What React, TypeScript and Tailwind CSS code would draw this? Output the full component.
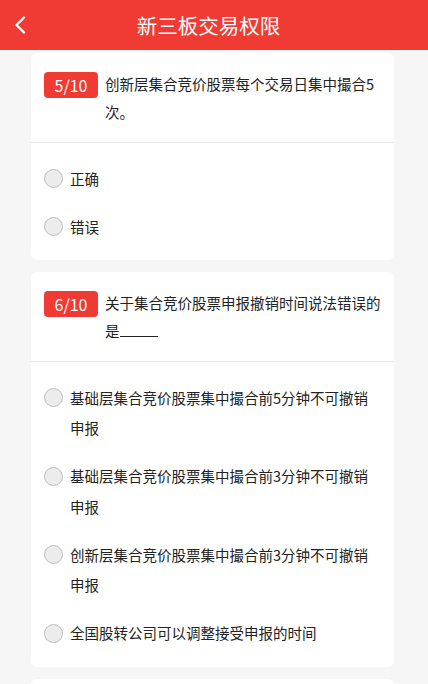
import React from 'react';

type Question = {
  no: string;
  text: string;
  blank?: boolean;
  options: string[];
};

const questions: Question[] = [
  {
    no: '5/10',
    text: '创新层集合竞价股票每个交易日集中撮合5次。',
    options: ['正确', '错误'],
  },
  {
    no: '6/10',
    text: '关于集合竞价股票申报撤销时间说法错误的是',
    blank: true,
    options: [
      '基础层集合竞价股票集中撮合前5分钟不可撤销申报',
      '基础层集合竞价股票集中撮合前3分钟不可撤销申报',
      '创新层集合竞价股票集中撮合前3分钟不可撤销申报',
      '全国股转公司可以调整接受申报的时间',
    ],
  },
];

function QuestionCard({ q }: { q: Question }) {
  return (
    <div className="bg-white rounded-md">
      {/* Question */}
      <div className="flex items-start pl-[13px] pr-[12px] pt-[17px] pb-[16px] border-b border-[#e6e6e6]">
        <span className="shrink-0 mt-[2px] w-[54px] h-[26px] flex items-center justify-center rounded-[4px] bg-[#ef3b33] text-white text-[16px]">
          {q.no}
        </span>
        <p className="ml-[7px] text-[14.5px] leading-[28px] text-[#222]">
          {q.text}
          {q.blank && <span className="inline-block w-[38px] h-[16px] border-b-[1.5px] border-[#222] align-baseline" />}
        </p>
      </div>

      {/* Options */}
      <div className="pt-[12px] pb-[9px] pl-[13px] pr-[12px]">
        {q.options.map((opt) => (
          <div key={opt} className="flex items-start py-[8.75px]">
            <span className="shrink-0 mt-[5.5px] w-[19px] h-[19px] rounded-full bg-[#ececec] border border-[#bdbdbd]" />
            <span className="ml-[7px] text-[14.5px] leading-[30.5px] text-[#222]">{opt}</span>
          </div>
        ))}
      </div>
    </div>
  );
}

export default function App() {
  return (
    <div
      className="w-[428px] h-[684px] overflow-hidden bg-[#f6f6f6]"
      style={{ fontFamily: '"Noto Sans CJK SC", "Noto Sans", sans-serif' }}
    >
      {/* Header */}
      <header className="relative h-[50px] bg-[#ef3b33] flex items-center justify-center">
        <button className="absolute left-[10px] top-[13px] w-[20px] h-[24px] flex items-center justify-center" aria-label="back">
          <svg width="14" height="18" viewBox="0 0 14 18" fill="none">
            <path d="M11 1.5L3.5 9L11 16.5" stroke="white" strokeWidth="2.4" strokeLinecap="round" strokeLinejoin="round" />
          </svg>
        </button>
        <h1 className="pr-[11px] text-white text-[20.5px] leading-none">新三板交易权限</h1>
      </header>

      <div className="pl-[31px] pr-[34px] pt-[3px] flex flex-col gap-[12px]">
        {questions.map((q) => (
          <QuestionCard key={q.no} q={q} />
        ))}
        <div className="bg-white rounded-md h-[40px]" />
      </div>
    </div>
  );
}
